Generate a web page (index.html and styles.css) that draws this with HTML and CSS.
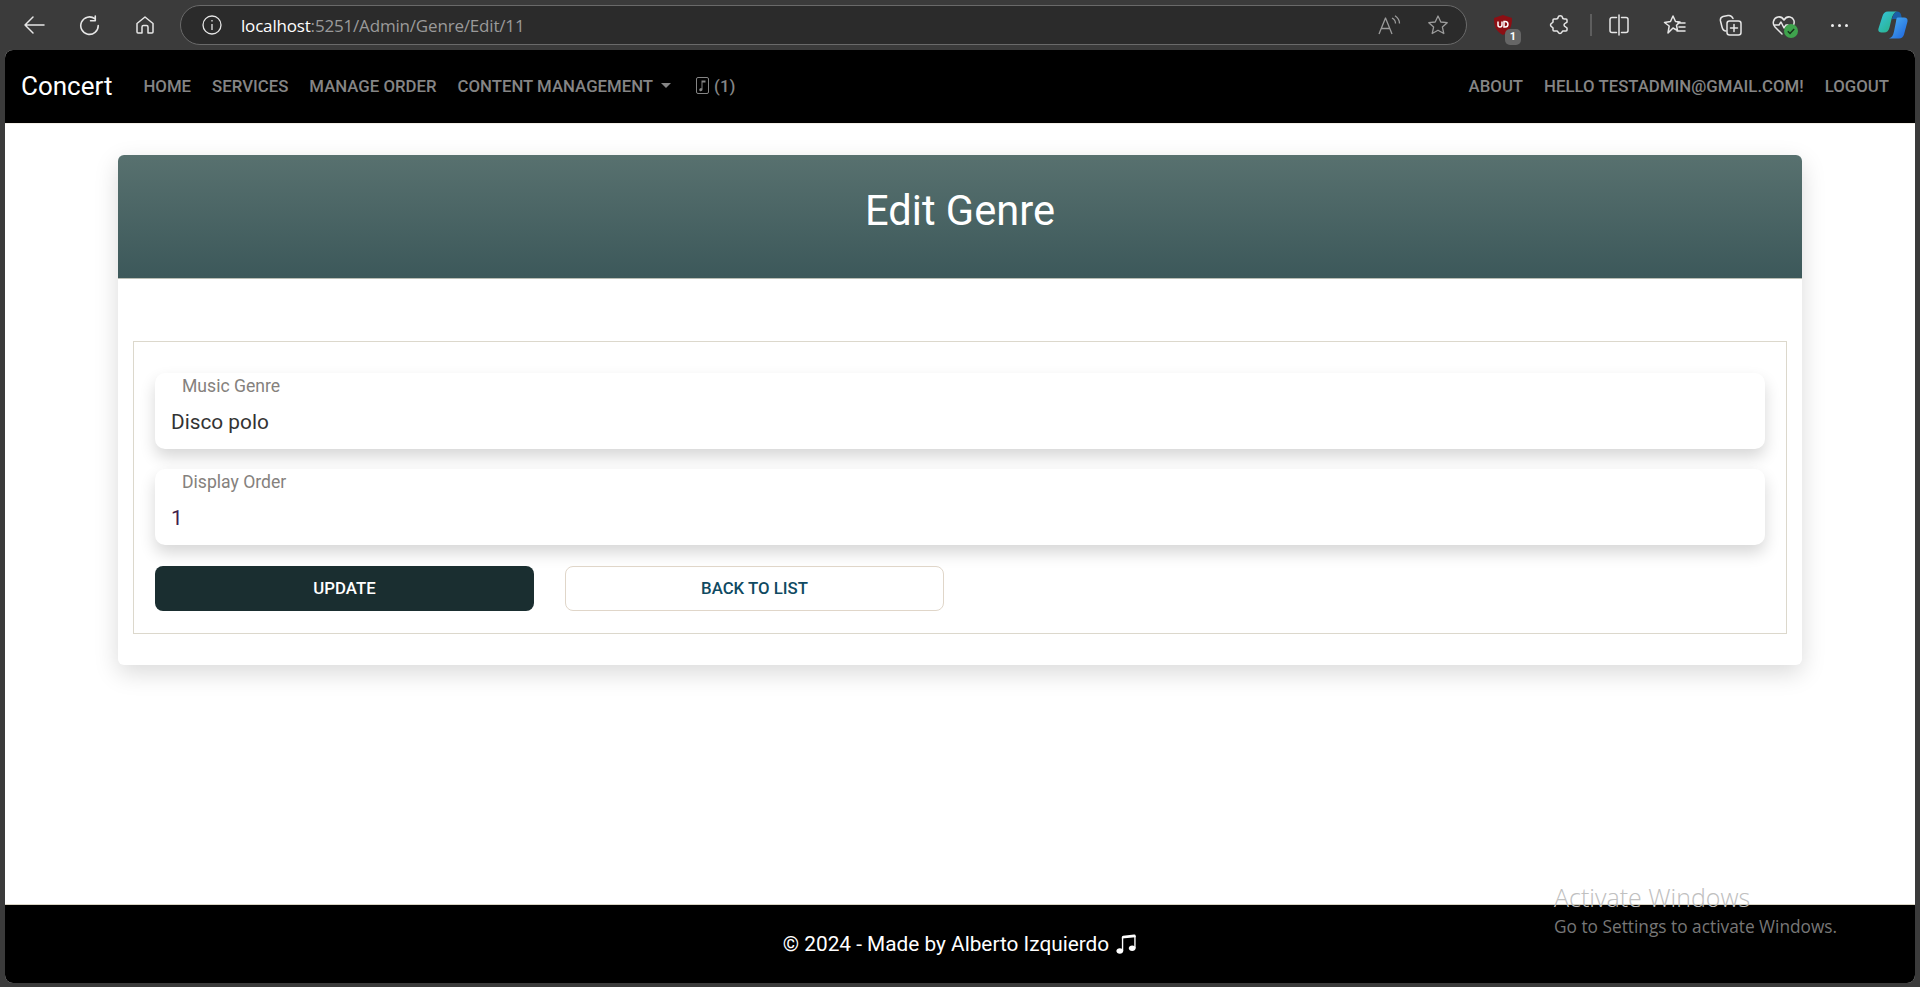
FILE: index.html
```html
<!DOCTYPE html>
<html lang="en">
<head>
    <meta charset="UTF-8">
    <meta name="viewport" content="width=device-width, initial-scale=1.0">
    <title>Edit Genre</title>
    <link rel="stylesheet" href="styles.css">
</head>
<body>

<div class="toolbar">
    <div class="tool-group">
        <svg class="tool tool-back" viewBox="0 0 22 20"><path d="M21 10H2M10 2l-8 8 8 8"/></svg>
        <svg class="tool tool-reload" viewBox="0 0 20 20"><path d="M15 3.500A8.300 8.300 0 1 0 18.300 10M15.500 1v4.500H11"/></svg>
        <svg class="tool tool-home" viewBox="0 0 20 20"><path d="M2 8.500 10 2l8 6.500V17a1 1 0 0 1-1 1h-4v-6a1.500 1.500 0 0 0-1.500-1.500h-3A1.500 1.500 0 0 0 7 12v6H3a1 1 0 0 1-1-1z"/></svg>
    </div>
    <div class="address">
        <svg class="tool-info" viewBox="0 0 20 20"><circle cx="10" cy="10" r="9"/><path d="M10 9v6M10 5v1.600"/></svg>
        <span class="url"><span class="url-host">localhost</span>:5251/Admin/Genre/Edit/11</span>
        <svg class="addr-icon addr-read" viewBox="0 0 24 20"><path d="M2 19 8.500 3 15 19M4.500 13.500h8M15 3c2 1 3.500 3 3.500 5.500M18 .8c2.500 1.700 4.500 4 4.500 7.700"/></svg>
        <svg class="addr-icon addr-star" viewBox="0 0 22 22"><path d="m11 2 2.800 6 6.400.7-4.800 4.400 1.400 6.400L11 16.200l-5.800 3.300 1.400-6.400L1.800 8.700 8.200 8z"/></svg>
    </div>
    <div class="tool-group tool-right">
        <div class="ublock">
            <svg viewBox="0 0 20 22"><path class="shield" d="M10 1 19 4c0 8-1.500 13-9 17C2.500 17 1 12 1 4z"/><path class="shield-mark" d="M5 7.500v3.500a2 2 0 0 0 4 0V7.500M11 7.500v5.500h1.200a2.700 2.700 0 0 0 0-5.500z"/></svg>
            <span class="ublock-badge">1</span>
        </div>
        <svg class="tool tool-puzzle" viewBox="0 0 22 22"><path d="M9 3.500a2.300 2.300 0 0 1 4.500 0c0 1 1 1.500 2 1.500h1.500a1 1 0 0 1 1 1v2c-.3 1-3 1-3 3s2.700 2 3 3v2a1 1 0 0 1-1 1h-3c-1 0-1 2.500-3 2.500s-2-2.500-3-2.500H5a1 1 0 0 1-1-1v-2c0-1-2.500-1-2.500-3S4 9 4 8V6a1 1 0 0 1 1-1h2c1 0 2-.5 2-1.500z"/></svg>
        <span class="tool-sep"></span>
        <svg class="tool tool-split" viewBox="0 0 22 22"><path d="M8.500 3.500H4a2 2 0 0 0-2 2v11a2 2 0 0 0 2 2h4.500M13.500 3.500H18a2 2 0 0 1 2 2v11a2 2 0 0 1-2 2h-4.500M11 1v20"/></svg>
        <svg class="tool tool-favs" viewBox="0 0 24 22"><path d="M10 2 12.500 7.500 17 8l-3.500 3.300 1 5.200L10 14l-5 5 1.200-7L1.500 8.500 7.500 7.500zM15 9h7M16 13h6M14 17h8"/></svg>
        <svg class="tool tool-coll" viewBox="0 0 24 22"><path d="M7 17C4.500 17 3.500 15 3 13L1.500 7C1 4.500 2.500 3 4 2.500L9 1.500c2.500-.5 4 .5 5 3"/><rect x="8" y="7" width="14" height="14" rx="2.500"/><path d="M15 10.500v7M11.500 14h7"/></svg>
        <div class="health">
            <svg class="tool tool-heart" viewBox="0 0 24 22"><path d="M10 20 3 13C0 10 1 4 6 3c2.500-.5 4.500.5 6 3 1.500-2.500 3.500-3.500 6-3 4 1 5 5 3.500 8M2 11h5l2-3 3 6 2-3h2"/></svg>
            <svg class="health-check" viewBox="0 0 14 14"><circle cx="7" cy="7" r="7"/><path d="m3.800 7.200 2.200 2.200 4.200-4.400"/></svg>
        </div>
        <span class="tool-dots"><i></i><i></i><i></i></span>
        <svg class="copilot" viewBox="0 0 30 30">
            <defs>
                <linearGradient id="copilotA" x1="0" y1="0" x2="1" y2="1"><stop offset="0" stop-color="#36c4e0"/><stop offset="1" stop-color="#27b07a"/></linearGradient>
                <linearGradient id="copilotB" x1="0" y1="0" x2="1" y2="1"><stop offset="0" stop-color="#4fb4f2"/><stop offset="1" stop-color="#1d63dd"/></linearGradient>
            </defs>
            <path fill="url(#copilotA)" d="M10 1.500h9c-3 1-4.500 3.500-5.500 7.500l-2 8.500c-.6 3-2.500 5-5.500 5H3.500C1 22.500-.2 21 .5 18.500L4.500 6C5.500 3 7 1.500 10 1.500z"/>
            <path fill="#1a5fa8" d="M19 1.500c2 0 3.500 1 4 3l1 4.500h-8c-1 0-2 .5-2 0 1-4 2-6.500 5-7.500z"/>
            <path fill="url(#copilotB)" d="M20 7.500h6c2.500 0 4 1.500 3.500 4l-3.500 13c-.8 2.500-2.500 4-5 4H11c3-1 4-3 5-7l2-10c.4-2.500 .5-4 2-4z"/>
        </svg>
    </div>
</div>

<div class="page">
    <nav class="navbar">
        <div class="nav-left">
            <a class="brand">Concert</a>
            <a class="nav-link">Home</a>
            <a class="nav-link">Services</a>
            <a class="nav-link">Manage Order</a>
            <a class="nav-link">Content Management<span class="caret"></span></a>
            <a class="nav-link nav-cart">
                <svg viewBox="0 0 13 17"><rect class="cart-box" x="0.500" y="0.500" width="12" height="16" rx="1.500"/><path d="M6.500 12.500c0 1-.8 1.700-1.800 1.700s-1.500-.7-1.500-1.500.7-1.500 1.700-1.500c.2 0 .4 0 .6.100V3.500h4v2H6.500z"/></svg>
                (1)
            </a>
        </div>
        <div class="nav-right">
            <a class="nav-link">About</a>
            <a class="nav-link">Hello testadmin@gmail.com!</a>
            <a class="nav-link">Logout</a>
        </div>
    </nav>

    <main class="content">
        <div class="card">
            <div class="card-header">
                <h1>Edit Genre</h1>
            </div>
            <div class="card-body">
                <form class="edit-form">
                    <div class="field">
                        <label>Music Genre</label>
                        <div class="field-value">Disco polo</div>
                    </div>
                    <div class="field">
                        <label>Display Order</label>
                        <div class="field-value field-number">1</div>
                    </div>
                    <div class="actions">
                        <a class="btn btn-update">Update</a>
                        <a class="btn btn-back">Back to List</a>
                    </div>
                </form>
            </div>
        </div>
    </main>

    <footer class="footer">
        © 2024 - Made by Alberto Izquierdo
        <svg viewBox="0 0 16 16"><path d="M6 13c0 1.105-1.120 2-2.500 2S1 14.105 1 13c0-1.104 1.120-2 2.500-2s2.500.896 2.500 2zm9-2c0 1.105-1.120 2-2.500 2s-2.500-.895-2.500-2 1.120-2 2.500-2 2.500.895 2.500 2z"/><path fill-rule="evenodd" d="M14 11V2h1v9h-1zM6 3v10H5V3h1z"/><path d="M5 2.905a1 1 0 0 1 .9-.995l8-.8a1 1 0 0 1 1.100.995V3L5 4V2.905z"/></svg>
    </footer>
</div>

<div class="watermark">
    <div class="watermark-title">Activate Windows</div>
    <div class="watermark-text">Go to Settings to activate Windows.</div>
</div>

</body>
</html>
```

FILE: styles.css
```css
* {
    box-sizing: border-box;
}
html, body {
    height: 100%;
}
body {
    margin: 0;
    height: 987px;
    overflow: hidden;
    display: flex;
    flex-direction: column;
    position: relative;
    background-color: #3b3b3b;
    font-family: Roboto, "Liberation Sans", sans-serif;
}

/* browser toolbar */
.toolbar {
    height: 50px;
    flex: none;
    display: flex;
    align-items: center;
    padding: 0 14px 0 23px;
}
.tool-group {
    display: flex;
    align-items: center;
}
.tool {
    fill: none;
    stroke: #e6e6e6;
    stroke-width: 1.5;
    stroke-linejoin: round;
    stroke-linecap: round;
    flex: none;
}
.tool-back {
    width: 22px;
    height: 20px;
    margin-right: 34px;
}
.tool-reload {
    width: 21px;
    height: 21px;
    margin-right: 35px;
}
.tool-home {
    width: 20px;
    height: 20px;
}
.address {
    flex: none;
    width: 1287px;
    height: 40px;
    margin-left: 25px;
    display: flex;
    align-items: center;
    padding: 0 17px 0 21px;
    background-color: #2b2b2b;
    border: 1.500px solid #6a6a6a;
    border-radius: 20px;
}
.tool-info {
    width: 20px;
    height: 20px;
    fill: none;
    stroke: #e6e6e6;
    stroke-width: 1.300;
    margin-right: 19px;
}
.url {
    font-family: "Open Sans", sans-serif;
    font-size: 17px;
    letter-spacing: -0.18px;
    color: #9a9a9a;
}
.url-host {
    color: #fff;
}
.addr-icon {
    fill: none;
    stroke: #9c9c9c;
    stroke-width: 1.300;
    stroke-linejoin: round;
}
.addr-read {
    width: 24px;
    height: 20px;
    margin-left: auto;
}
.addr-star {
    width: 22px;
    height: 22px;
    margin-left: 26px;
}
.tool-right {
    margin-left: 26px;
}
.ublock {
    position: relative;
    width: 20px;
    height: 22px;
    margin-right: 36px;
}
.ublock svg {
    display: block;
    width: 20px;
    height: 22px;
}
.shield {
    fill: #8c0f14;
}
.shield-mark {
    fill: none;
    stroke: #fff;
    stroke-width: 1.500;
}
.ublock-badge {
    position: absolute;
    left: 12px;
    top: 15px;
    width: 16px;
    height: 16px;
    border-radius: 5px;
    background-color: #666;
    color: #fff;
    font-size: 11px;
    font-weight: 700;
    line-height: 16px;
    text-align: center;
}
.tool-puzzle {
    width: 22px;
    height: 22px;
}
.tool-sep {
    width: 2px;
    height: 22px;
    background-color: #5e5e5e;
    margin: 0 16px 0 19px;
}
.tool-split {
    width: 22px;
    height: 22px;
    margin-right: 33px;
}
.tool-favs {
    width: 24px;
    height: 22px;
    margin-right: 32px;
}
.tool-coll {
    width: 24px;
    height: 22px;
    margin-right: 29px;
}
.health {
    position: relative;
    width: 24px;
    height: 22px;
    margin-right: 35px;
}
.tool-heart {
    display: block;
    width: 24px;
    height: 22px;
}
.health-check {
    position: absolute;
    left: 12px;
    top: 10px;
    width: 14px;
    height: 14px;
}
.health-check circle {
    fill: #3fa34d;
}
.health-check path {
    fill: none;
    stroke: #16301a;
    stroke-width: 1.400;
}
.tool-dots {
    display: flex;
    gap: 4px;
    width: 17px;
    margin-right: 30px;
}
.tool-dots i {
    width: 3px;
    height: 3px;
    border-radius: 50%;
    background-color: #f0f0f0;
}
.copilot {
    width: 30px;
    height: 30px;
}

/* page */
.page {
    flex: 1;
    min-height: 0;
    margin: 0 5px 4px;
    display: flex;
    flex-direction: column;
    background-color: #fff;
    border-radius: 8px;
    overflow: hidden;
}
.navbar {
    height: 73px;
    flex: none;
    display: flex;
    align-items: center;
    justify-content: space-between;
    padding: 0 26px 2px 16px;
    background-color: #000;
}
.nav-left, .nav-right {
    display: flex;
    align-items: center;
    gap: 21px;
}
.brand {
    font-size: 26px;
    color: #fff;
    margin-right: 10px;
}
.nav-link {
    display: flex;
    align-items: center;
    font-size: 16.800px;
    font-weight: 500;
    text-transform: uppercase;
    color: #858585;
}
.caret {
    width: 0;
    height: 0;
    margin-left: 8px;
    border-top: 5px solid #858585;
    border-left: 5px solid transparent;
    border-right: 5px solid transparent;
}
.nav-cart {
    gap: 5px;
    margin-left: 4px;
}
.nav-cart svg {
    width: 13px;
    height: 17px;
    fill: #858585;
}
.cart-box {
    fill: none;
    stroke: #858585;
    stroke-width: 1;
}
.content {
    flex: 1;
    padding: 31px 113px 0;
    border-top: 1px solid #f3efe8;
}
.card {
    background-color: #fff;
    border-radius: 6px;
    box-shadow: 0 8px 24px rgba(0, 0, 0, 0.15);
}
.card-header {
    height: 124px;
    display: flex;
    align-items: center;
    justify-content: center;
    padding-bottom: 12px;
    border-radius: 6px 6px 0 0;
    border-bottom: 1px solid #b9bdb4;
    background: linear-gradient(#58716f, #3c585a);
}
.card-header h1 {
    margin: 0;
    font-size: 41.600px;
    font-weight: 400;
    color: #fff;
}
.card-body {
    padding: 62px 15px 31px;
}
.edit-form {
    border: 1px solid #dcd8cc;
    padding: 31px 21px 22px;
}
.field {
    height: 76px;
    margin-bottom: 20px;
    padding: 0 16px;
    background-color: #fff;
    border-radius: 10px;
    box-shadow: 0 8px 16px rgba(0, 0, 0, 0.16);
}
.field label {
    display: block;
    padding: 1px 0 0 11px;
    font-size: 17.600px;
    line-height: 24px;
    color: #85817d;
}
.field-value {
    margin-top: 9px;
    font-size: 20.800px;
    line-height: 30px;
    color: #333;
}
.field-number {
    color: #40204a;
}
.actions {
    display: flex;
    gap: 31px;
    padding-top: 1px;
}
.btn {
    width: 379px;
    height: 45px;
    display: flex;
    align-items: center;
    justify-content: center;
    padding-bottom: 2px;
    border-radius: 8px;
    font-size: 16.800px;
    font-weight: 500;
    text-transform: uppercase;
}
.btn-update {
    background-color: #1a2e30;
    color: #fff;
}
.btn-back {
    border: 1px solid #e0d6c9;
    color: #0f4a62;
}
.footer {
    height: 79px;
    flex: none;
    display: flex;
    align-items: center;
    justify-content: center;
    gap: 6px;
    background-color: #000;
    border-top: 1px solid #d8d3c4;
    color: #fff;
    font-size: 20.800px;
}
.footer svg {
    width: 22px;
    height: 22px;
    fill: #fff;
}

/* windows watermark over the page */
.watermark {
    position: absolute;
    left: 1554px;
    top: 881px;
    font-family: "Open Sans", sans-serif;
    pointer-events: none;
}
.watermark-title {
    font-size: 25px;
    font-weight: 300;
    line-height: 32px;
    color: #c0c0c0;
}
.watermark-text {
    margin-top: 2px;
    font-size: 17.300px;
    line-height: 24px;
    color: #777;
}
```
